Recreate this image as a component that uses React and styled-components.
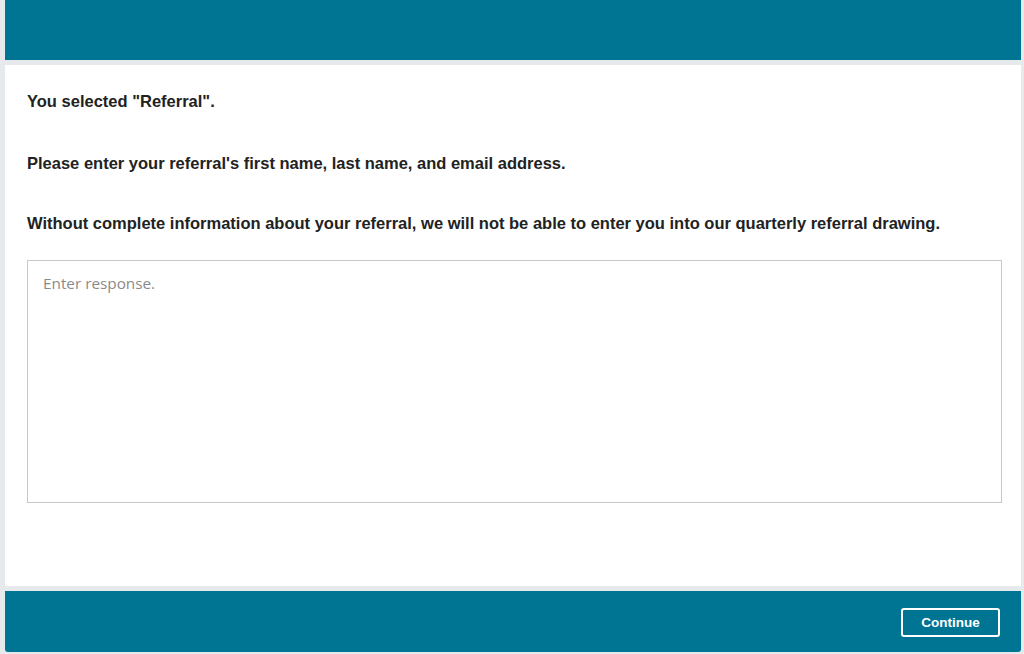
import React from "react";
import styled, { createGlobalStyle } from "styled-components";

const Global = createGlobalStyle`
  html, body { margin: 0; padding: 0; background: #e6eaed; }
  body { font-family: "Liberation Sans", Arial, sans-serif; }
  * { box-sizing: border-box; }
`;

const Page = styled.div`
  height: 654px;
  padding: 0 3px 2px 5px;
  display: flex;
  flex-direction: column;
  gap: 5px;
`;

const Header = styled.header`
  height: 60px;
  flex: none;
  background: #007493;
`;

const Main = styled.main`
  flex: 1;
  background: #ffffff;
  padding: 27px 20px 0 22px;
  display: flex;
  flex-direction: column;
`;

const Prompt = styled.p`
  margin: 0 0 ${(p) => p.$gap}px;
  font-size: 16.5px;
  line-height: 19px;
  font-weight: 700;
  color: #222;
`;

const Response = styled.textarea`
  width: 975px;
  height: 243px;
  border: 1px solid #c6c8ca;
  border-radius: 0;
  padding: 12px 15px;
  resize: none;
  font-family: "Open Sans", "Segoe UI", sans-serif;
  font-size: 15.3px;
  color: #333;
  outline: none;
  &::placeholder { color: #8a8a8a; }
`;

const Footer = styled.footer`
  height: 61px;
  flex: none;
  background: #007493;
  border-radius: 0 0 3px 3px;
  display: flex;
  align-items: center;
  justify-content: flex-end;
  padding-right: 21px;
`;

const Button = styled.button`
  width: 99px;
  height: 29px;
  margin-top: 2px;
  background: transparent;
  border: 2px solid #ffffff;
  border-radius: 3px;
  color: #ffffff;
  font-family: "Liberation Sans", Arial, sans-serif;
  font-weight: 700;
  font-size: 13.5px;
  cursor: pointer;
`;

export default function App() {
  return (
    <>
      <Global />
      <Page>
        <Header />
        <Main>
          <Prompt $gap={43}>You selected "Referral".</Prompt>
          <Prompt $gap={41}>Please enter your referral's first name, last name, and email address.</Prompt>
          <Prompt $gap={27}>
            Without complete information about your referral, we will not be able to enter you into our quarterly referral drawing.
          </Prompt>
          <Response placeholder="Enter response." />
        </Main>
        <Footer>
          <Button>Continue</Button>
        </Footer>
      </Page>
    </>
  );
}
